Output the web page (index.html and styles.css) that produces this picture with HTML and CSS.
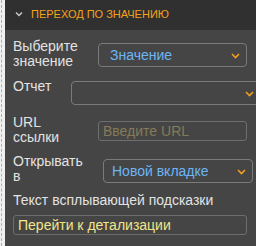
FILE: index.html
```html
<!DOCTYPE html>
<html>
<head>
    <title>Переход по значению</title>
    <meta name="viewport" content="width=device-width, initial-scale=1">
    <link rel="stylesheet" href="styles.css">
</head>
<body>
    <div class="page">
        <div class="panel">
            <div class="panel-header">
                <svg class="toggle" width="8" height="6" viewBox="0 0 8 6">
                    <path d="M1 1.5 L4 4.5 L7 1.5" fill="none" stroke="#c8c8c8" stroke-width="1.5"/>
                </svg>
                <span class="title">Переход по значению</span>
            </div>
            <div class="panel-body">
                <div class="row row-value">
                    <label class="label label-wide">Выберите значение</label>
                    <div class="select select-value">
                        <span>Значение</span>
                        <svg class="caret" width="9" height="6" viewBox="0 0 9 6"><path d="M1 1 L4.5 4.5 L8 1" fill="none" stroke="#f0a020" stroke-width="1.6"/></svg>
                    </div>
                </div>
                <div class="row row-report">
                    <label class="label label-short">Отчет</label>
                    <div class="select select-report">
                        <span></span>
                        <svg class="caret" width="9" height="6" viewBox="0 0 9 6"><path d="M1 1 L4.5 4.5 L8 1" fill="none" stroke="#f0a020" stroke-width="1.6"/></svg>
                    </div>
                </div>
                <div class="row row-url">
                    <label class="label label-wide">URL ссылки</label>
                    <input class="field field-url" type="text" placeholder="Введите URL">
                </div>
                <div class="row row-open">
                    <label class="label label-open">Открывать в</label>
                    <div class="select select-open">
                        <span>Новой вкладке</span>
                        <svg class="caret" width="9" height="6" viewBox="0 0 9 6"><path d="M1 1 L4.5 4.5 L8 1" fill="none" stroke="#f0a020" stroke-width="1.6"/></svg>
                    </div>
                </div>
                <div class="block">
                    <label class="label">Текст всплывающей подсказки</label>
                    <input class="field field-tip" type="text" value="Перейти к детализации">
                </div>
            </div>
            <div class="panel-footer"></div>
        </div>
    </div>
</body>
</html>
```

FILE: styles.css
```css
body {
    margin: 0;
    background: #f0f0f0;
    font-family: "Liberation Sans", Arial, sans-serif;
    overflow: hidden;
}
.page {
    height: 246px;
    margin-left: 1px;
    padding-left: 3px;
    border-left: 1px dashed #b0b0b0;
}
.panel {
    background: #454545;
    height: 246px;
    overflow: hidden;
}
.panel-header {
    height: 30px;
    background: #303030;
    display: flex;
    align-items: center;
    padding-left: 10px;
}
.toggle {
    margin-top: -3px;
}
.title {
    margin-left: 8px;
    margin-top: -3px;
    color: #f7a11a;
    font-size: 11px;
    text-transform: uppercase;
    white-space: nowrap;
}
.panel-body {
    padding: 9px 0 8px 8px;
    height: 204px;
}
.panel-footer {
    height: 10px;
    background: #303030;
}
.row {
    display: flex;
    align-items: flex-start;
    margin-top: 10px;
}
.row-value {
    margin-top: 0;
}
.row-open {
    margin-top: 9px;
}
.label {
    display: block;
    color: #e2e2e2;
    font-size: 14px;
    line-height: 15px;
    flex-shrink: 0;
}
.label-wide {
    width: 70px;
    margin-right: 15px;
}
.label-short {
    width: 58px;
}
.label-open {
    width: 70px;
    margin-right: 20px;
}
.select {
    box-sizing: border-box;
    height: 24px;
    border: 1px solid #7a7a7a;
    border-radius: 4px;
    display: flex;
    align-items: center;
    justify-content: space-between;
    padding: 0 6px 0 11px;
    color: #6cb6f5;
    font-size: 14px;
    flex-shrink: 0;
}
.select-value {
    width: 149px;
    margin-top: 4px;
}
.select-report {
    width: 190px;
    margin-top: 2px;
}
.select-open {
    width: 150px;
    margin-top: 5px;
    padding-left: 8px;
}
.caret {
    margin-top: 2px;
}
.field {
    box-sizing: border-box;
    height: 20px;
    border: 1px solid #6e6e6e;
    border-radius: 3px;
    background: #454545;
    font-family: "Liberation Sans", Arial, sans-serif;
    font-size: 14px;
    padding: 0 4px;
    outline: none;
}
.field-url {
    width: 149px;
    margin-top: 6px;
}
.field-url::placeholder {
    color: #857b58;
}
.block {
    margin-top: 9px;
}
.field-tip {
    display: block;
    width: 234px;
    margin-top: 7px;
    color: #f2e58a;
}
```
